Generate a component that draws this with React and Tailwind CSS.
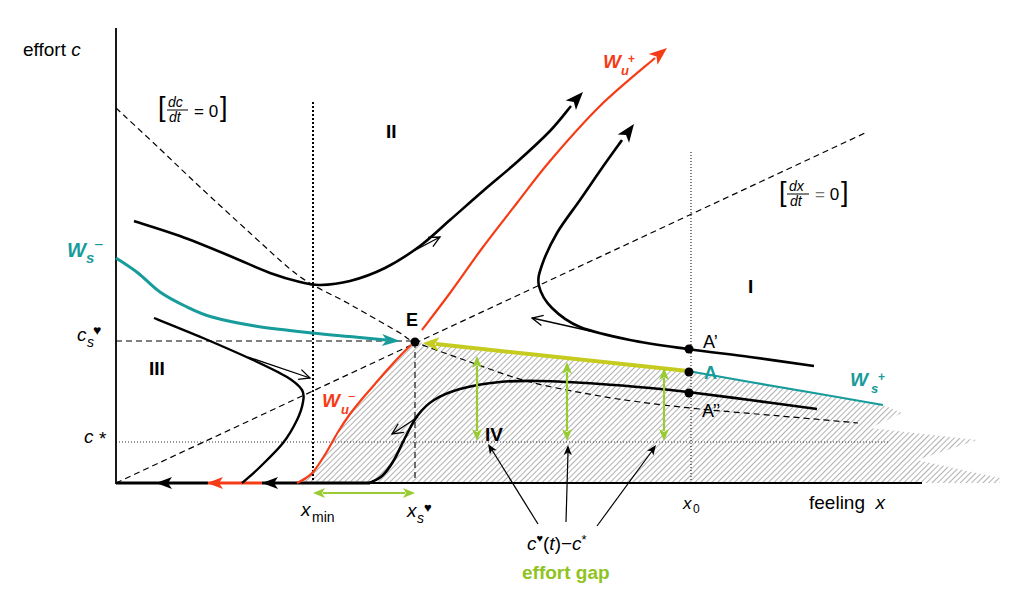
import React from "react";

const teal = "#179b9b";
const red = "#f63c16";
const yellow = "#c6cc1f";
const green = "#99cc33";

// catmull-rom through the points, as cubic beziers
function smoothPath(points) {
  let d = `M${points[0][0]},${points[0][1]}`;
  for (let i = 0; i < points.length - 1; i++) {
    const p0 = points[i - 1] || points[i];
    const p1 = points[i];
    const p2 = points[i + 1];
    const p3 = points[i + 2] || p2;
    const c1x = p1[0] + (p2[0] - p0[0]) / 6;
    const c1y = p1[1] + (p2[1] - p0[1]) / 6;
    const c2x = p2[0] - (p3[0] - p1[0]) / 6;
    const c2y = p2[1] - (p3[1] - p1[1]) / 6;
    d += ` C${c1x.toFixed(1)},${c1y.toFixed(1)} ${c2x.toFixed(1)},${c2y.toFixed(1)} ${p2[0]},${p2[1]}`;
  }
  return d;
}

function unit(from, tip) {
  const dx = tip[0] - from[0];
  const dy = tip[1] - from[1];
  const len = Math.hypot(dx, dy) || 1;
  return [dx / len, dy / len];
}

function Head({ from, tip, len = 14, half = 5, color = "#000" }) {
  const [ux, uy] = unit(from, tip);
  const bx = tip[0] - ux * len;
  const by = tip[1] - uy * len;
  const pts = [
    tip,
    [bx - uy * half, by + ux * half],
    [tip[0] - ux * len * 0.75, tip[1] - uy * len * 0.75],
    [bx + uy * half, by - ux * half],
  ];
  return <polygon points={pts.map((p) => p.join(",")).join(" ")} fill={color} />;
}

function OpenArrow({ from, tip, len = 12, spread = 0.45 }) {
  const [ux, uy] = unit(from, tip);
  const arm = (s) => {
    const c = Math.cos(s);
    const n = Math.sin(s);
    const rx = ux * c - uy * n;
    const ry = ux * n + uy * c;
    return [tip[0] - rx * len, tip[1] - ry * len];
  };
  const a = arm(spread);
  const b = arm(-spread);
  return (
    <g stroke="#000" strokeWidth="1.3" fill="none">
      <line x1={from[0]} y1={from[1]} x2={tip[0]} y2={tip[1]} />
      <polyline points={`${a.join(",")} ${tip.join(",")} ${b.join(",")}`} />
    </g>
  );
}

function DoubleArrow({ a, b, color = green }) {
  const [ux, uy] = unit(a, b);
  const s = [a[0] + ux * 10, a[1] + uy * 10];
  const e = [b[0] - ux * 10, b[1] - uy * 10];
  return (
    <g>
      <line x1={s[0]} y1={s[1]} x2={e[0]} y2={e[1]} stroke={color} strokeWidth="2.2" />
      <Head from={b} tip={a} len={12} half={5} color={color} />
      <Head from={a} tip={b} len={12} half={5} color={color} />
    </g>
  );
}

const trajII = [
  [134, 221], [180, 236], [230, 256], [270, 273], [300, 282], [320, 285],
  [350, 281], [385, 268], [420, 246], [450, 220], [483, 191], [517, 162],
  [550, 131], [571, 106],
];
const trajI = [
  [814, 366], [750, 357], [688, 349], [630, 340], [580, 327], [552, 308],
  [539, 286], [542, 265], [557, 233], [580, 200], [602, 168], [622, 140],
];
const trajIII = [
  [154, 318], [203, 338], [253, 360], [287, 377], [302, 390], [303, 402],
  [297, 420], [283, 443], [260, 467], [242, 483],
];
const trajIV = [
  [369, 483], [382, 476], [394, 460], [406, 436], [418, 415], [434, 400],
  [460, 389], [500, 382], [540, 381], [600, 384], [650, 388], [688, 392],
  [750, 400], [817, 409],
];
const wuMinus = [
  [297, 483], [306, 478], [314, 471], [326, 453], [338, 432], [350, 414],
  [362, 399], [375, 384], [388, 369], [400, 356], [411, 345],
];
const wuPlus = [
  [422, 330], [450, 293], [483, 247], [517, 203], [550, 161], [600, 106], [655, 58],
];
const wsMinus = [
  [116, 258], [138, 273], [160, 292], [185, 306], [212, 317], [255, 326],
  [312, 333], [355, 337], [386, 340],
];
const dcNull = [
  [116, 108], [160, 149], [200, 187], [250, 233], [290, 269], [313, 285],
  [340, 299], [367, 314], [400, 333], [415, 342], [470, 362], [530, 382],
  [600, 396], [640, 402], [700, 409], [780, 416], [858, 423],
];

const hatch =
  smoothPath(wuMinus) +
  " L415,342 L688,371 L883,405 L902,413 L870,428 L977,440 L917,460 L1000,478 L1000,483 L297,483 Z";

function Chart() {
  return (
    <svg width="1036" height="592" viewBox="0 0 1036 592">
      <defs>
        <pattern id="hatch" width="4" height="4" patternUnits="userSpaceOnUse" patternTransform="rotate(45)">
          <line x1="0" y1="0" x2="0" y2="4" stroke="#6f6f6f" strokeWidth="1.1" />
        </pattern>
      </defs>

      <path d={hatch} fill="url(#hatch)" />

      {/* nullclines and guide lines */}
      <path d={smoothPath(dcNull)} fill="none" stroke="#000" strokeWidth="1.2" strokeDasharray="6 4" />
      <line x1="116" y1="483" x2="865" y2="133" stroke="#000" strokeWidth="1.2" strokeDasharray="6 4" />
      <line x1="116" y1="341" x2="415" y2="341" stroke="#000" strokeWidth="1.1" strokeDasharray="6 4" />
      <line x1="415" y1="342" x2="415" y2="483" stroke="#000" strokeWidth="1.1" strokeDasharray="6 4" />
      <line x1="116" y1="442" x2="890" y2="442" stroke="#333" strokeWidth="1" strokeDasharray="1 2" />
      <line x1="313" y1="102" x2="313" y2="483" stroke="#000" strokeWidth="2" strokeDasharray="2 2" />
      <line x1="691" y1="152" x2="691" y2="483" stroke="#000" strokeWidth="1" strokeDasharray="1 2" />

      {/* axes */}
      <line x1="116" y1="28" x2="116" y2="484" stroke="#000" strokeWidth="1.8" />
      <line x1="116" y1="483" x2="922" y2="483" stroke="#000" strokeWidth="1.8" />
      <line x1="116" y1="483" x2="208" y2="483" stroke="#000" strokeWidth="3" />
      <line x1="208" y1="483" x2="262" y2="483" stroke={red} strokeWidth="3" />
      <line x1="262" y1="483" x2="370" y2="483" stroke="#000" strokeWidth="3" />
      <Head from={[200, 483]} tip={[156, 483]} len={16} half={6} />
      <Head from={[250, 483]} tip={[207, 483]} len={16} half={6} color={red} />
      <Head from={[300, 483]} tip={[262, 483]} len={16} half={6} />

      {/* trajectories */}
      <path d={smoothPath(trajII)} fill="none" stroke="#000" strokeWidth="2.6" />
      <Head from={[560, 117]} tip={[583, 92]} len={18} half={7} />
      <OpenArrow from={[408, 254]} tip={[440, 237]} />

      <path d={smoothPath(trajI)} fill="none" stroke="#000" strokeWidth="2.6" />
      <Head from={[615, 150]} tip={[634, 124]} len={18} half={7} />
      <OpenArrow from={[590, 331]} tip={[532, 318]} />

      <path d={smoothPath(trajIII)} fill="none" stroke="#000" strokeWidth="2.4" />
      <OpenArrow from={[248, 357]} tip={[310, 378]} />

      <path d={smoothPath(trajIV)} fill="none" stroke="#000" strokeWidth="2.6" />
      <OpenArrow from={[418, 417]} tip={[392, 434]} />

      <path d={smoothPath(wuMinus)} fill="none" stroke={red} strokeWidth="2.2" />
      <path d={smoothPath(wuPlus)} fill="none" stroke={red} strokeWidth="2.2" />
      <Head from={[645, 66]} tip={[667, 48]} len={18} half={7} color={red} />

      <path d={smoothPath(wsMinus)} fill="none" stroke={teal} strokeWidth="3" />
      <Head from={[380, 340]} tip={[400, 341]} len={18} half={6} color={teal} />

      <path d="M688,371 L750,382 L820,394 L883,405" fill="none" stroke={teal} strokeWidth="2.2" />
      <line x1="436" y1="344" x2="688" y2="371" stroke={yellow} strokeWidth="4" />
      <Head from={[460, 346]} tip={[423, 343]} len={16} half={7} color={yellow} />

      {/* effort gap arrows */}
      <DoubleArrow a={[477, 356]} b={[477, 441]} />
      <DoubleArrow a={[567, 362]} b={[567, 441]} />
      <DoubleArrow a={[664, 368]} b={[664, 441]} />
      <DoubleArrow a={[313, 493]} b={[415, 493]} />

      {/* pointers to the gap label */}
      <line x1="538" y1="524" x2="492" y2="450" stroke="#000" strokeWidth="1.2" />
      <Head from={[538, 524]} tip={[488, 444]} len={10} half={4} />
      <line x1="566" y1="522" x2="568" y2="452" stroke="#000" strokeWidth="1.2" />
      <Head from={[566, 522]} tip={[568, 445]} len={10} half={4} />
      <line x1="597" y1="526" x2="652" y2="451" stroke="#000" strokeWidth="1.2" />
      <Head from={[597, 526]} tip={[656, 445]} len={10} half={4} />

      <circle cx="415" cy="342" r="4.5" fill="#000" />
      <circle cx="689" cy="349" r="4.5" fill="#000" />
      <circle cx="689" cy="372" r="4.5" fill="#000" />
      <circle cx="689" cy="393" r="4.5" fill="#000" />

      {/* labels */}
      <text x="23" y="56" fontSize="19">
        effort <tspan fontStyle="italic">c</tspan>
      </text>

      <text x="158" y="116" fontSize="27">[</text>
      <text x="168" y="107" fontSize="14" fontStyle="italic">dc</text>
      <line x1="167" y1="110" x2="188" y2="110" stroke="#000" strokeWidth="1" />
      <text x="169" y="122" fontSize="14" fontStyle="italic">dt</text>
      <text x="194" y="117" fontSize="17">= 0</text>
      <text x="220" y="116" fontSize="27">]</text>

      <text x="779" y="201" fontSize="27">[</text>
      <text x="789" y="191" fontSize="14" fontStyle="italic">dx</text>
      <line x1="787" y1="194" x2="809" y2="194" stroke="#000" strokeWidth="1" />
      <text x="790" y="206" fontSize="14" fontStyle="italic">dt</text>
      <text x="815" y="200" fontSize="17">
        <tspan fill="#777">=</tspan> 0
      </text>
      <text x="841" y="201" fontSize="27">]</text>

      <text x="386" y="138" fontSize="19" fontWeight="bold">II</text>
      <text x="748" y="293" fontSize="19" fontWeight="bold">I</text>
      <text x="149" y="375" fontSize="19" fontWeight="bold">III</text>
      <text x="485" y="441" fontSize="19" fontWeight="bold">IV</text>
      <text x="406" y="326" fontSize="18" fontWeight="bold">E</text>

      <text x="67" y="257" fontSize="20" fontWeight="bold" fontStyle="italic" fill={teal}>W</text>
      <text x="86" y="263" fontSize="15" fontWeight="bold" fontStyle="italic" fill={teal}>s</text>
      <text x="94" y="250" fontSize="16" fill={teal}>−</text>

      <text x="603" y="68" fontSize="19" fontWeight="bold" fontStyle="italic" fill={red}>W</text>
      <text x="621" y="75" fontSize="13" fontWeight="bold" fontStyle="italic" fill={red}>u</text>
      <text x="628" y="63" fontSize="12" fontWeight="bold" fill={red}>+</text>

      <text x="322" y="407" fontSize="19" fontWeight="bold" fontStyle="italic" fill={red}>W</text>
      <text x="341" y="414" fontSize="13" fontWeight="bold" fontStyle="italic" fill={red}>u</text>
      <text x="348" y="401" fontSize="13" fill={red}>−</text>

      <text x="850" y="386" fontSize="19" fontWeight="bold" fontStyle="italic" fill={teal}>W</text>
      <text x="871" y="393" fontSize="13" fontWeight="bold" fontStyle="italic" fill={teal}>s</text>
      <text x="878" y="381" fontSize="12" fontWeight="bold" fill={teal}>+</text>

      <text x="703" y="348" fontSize="18">A’</text>
      <text x="704" y="379" fontSize="18" fontWeight="bold" fill={teal}>A</text>
      <text x="702" y="417" fontSize="18">A’’</text>

      <text x="77" y="341" fontSize="19" fontStyle="italic">c</text>
      <text x="87" y="347" fontSize="14" fontStyle="italic">s</text>
      <text x="93" y="335" fontSize="14">♥</text>

      <text x="84" y="443" fontSize="19" fontStyle="italic">c</text>
      <text x="99" y="445" fontSize="19">*</text>

      <text x="301" y="516" fontSize="19" fontStyle="italic">x</text>
      <text x="312" y="522" fontSize="14">min</text>

      <text x="407" y="517" fontSize="19" fontStyle="italic">x</text>
      <text x="417" y="523" fontSize="14" fontStyle="italic">s</text>
      <text x="424" y="512" fontSize="13">♥</text>

      <text x="683" y="509" fontSize="17" fontStyle="italic">x</text>
      <text x="693" y="513" fontSize="12">0</text>

      <text x="809" y="509" fontSize="19" xmlSpace="preserve">
        feeling  <tspan fontStyle="italic">x</tspan>
      </text>

      <text x="527" y="550" fontSize="19">
        <tspan fontStyle="italic">c</tspan>
        <tspan fontSize="11" dy="-8">♥</tspan>
        <tspan dy="8">(</tspan>
        <tspan fontStyle="italic">t</tspan>)−<tspan fontStyle="italic">c</tspan>
        <tspan fontSize="13" dy="-6">*</tspan>
      </text>

      <text x="522" y="579" fontSize="19" fontWeight="bold" fill="#8fc31f">effort gap</text>
    </svg>
  );
}

export default function App() {
  return (
    <div className="flex h-[592px] w-[1036px] overflow-hidden bg-white font-['Liberation_Sans',Arial,sans-serif]">
      <Chart />
    </div>
  );
}
